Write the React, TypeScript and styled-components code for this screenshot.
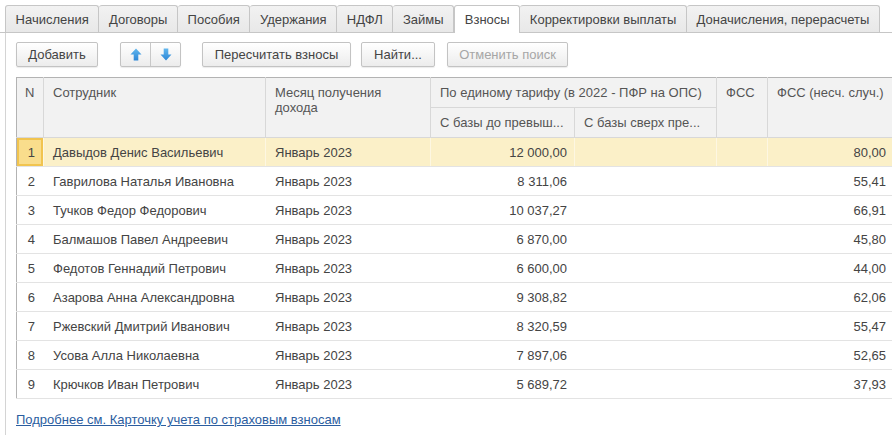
import styled, { createGlobalStyle } from "styled-components";

const GlobalStyle = createGlobalStyle`
  html, body {
    margin: 0;
    padding: 0;
    background: #ffffff;
    overflow: hidden;
  }
  body {
    font-family: "Liberation Sans", Arial, sans-serif;
    font-size: 13px;
    color: #444444;
  }
`;

const Page = styled.div`
  width: 892px;
  height: 435px;
  padding-top: 5px;
  box-sizing: border-box;
  overflow: hidden;
`;

const TabBar = styled.div`
  display: flex;
  padding-left: 5px;
  border-bottom: 1px solid #c6c6c6;
  height: 27px;
`;

const Tab = styled.div<{ $active?: boolean }>`
  box-sizing: border-box;
  padding: 0 9.6px;
  display: flex;
  align-items: center;
  white-space: nowrap;
  color: #444444;
  border: 1px solid #c6c6c6;
  border-left: ${(p) => (p.$active ? "1px solid #c6c6c6" : "none")};
  border-bottom: none;
  border-radius: 3px 3px 0 0;
  background: ${(p) => (p.$active ? "#ffffff" : "linear-gradient(#f2f2f2, #e8e8e8)")};
  height: ${(p) => (p.$active ? "28px" : "27px")};
  &:first-child {
    border-left: 1px solid #c6c6c6;
  }
`;

const Panel = styled.div`
  margin-left: 5px;
  border-left: 1px solid #d4d4d4;
  padding: 9px 0 0 10px;
  height: 400px;
`;

const Toolbar = styled.div`
  display: flex;
  align-items: center;
  height: 25px;
  margin-bottom: 10px;
`;

const Button = styled.button<{ $ml?: number; $w: number; $disabled?: boolean }>`
  margin-left: ${(p) => p.$ml ?? 0}px;
  width: ${(p) => p.$w}px;
  height: 25px;
  box-sizing: border-box;
  border: 1px solid #c3c3c3;
  border-radius: 2px;
  background: linear-gradient(#ffffff, #ececec);
  box-shadow: 0 1px 1px rgba(0, 0, 0, 0.08);
  font-family: "Liberation Sans", Arial, sans-serif;
  font-size: 13px;
  color: ${(p) => (p.$disabled ? "#a6a6a6" : "#444444")};
  padding: 0;
  cursor: default;
`;

const ArrowGroup = styled.div<{ $ml: number }>`
  margin-left: ${(p) => p.$ml}px;
  display: flex;
  height: 25px;
  box-sizing: border-box;
  border: 1px solid #c3c3c3;
  border-radius: 2px;
  background: linear-gradient(#ffffff, #ececec);
  box-shadow: 0 1px 1px rgba(0, 0, 0, 0.08);
`;

const ArrowCell = styled.div<{ $sep?: boolean }>`
  width: 29px;
  display: flex;
  align-items: center;
  justify-content: center;
  border-left: ${(p) => (p.$sep ? "1px solid #c8c8c8" : "none")};
`;

const Grid = styled.table`
  border-collapse: collapse;
  table-layout: fixed;
  width: 881px;
  border-top: 1px solid #b3b3b3;
  border-left: 1px solid #b3b3b3;
  border-bottom: 1px solid #a0a0a0;
`;

const HeadCell = styled.th`
  background: #f2f2f2;
  color: #555555;
  font-weight: normal;
  text-align: left;
  vertical-align: top;
  padding: 7px 8px 0 9px;
  height: 30px;
  box-sizing: border-box;
  line-height: 15px;
  border-right: 1px solid #d8d8d8;
  border-bottom: 1px solid #d8d8d8;
  white-space: nowrap;
  overflow: hidden;
  text-overflow: ellipsis;
`;

const Row = styled.tr<{ $selected?: boolean }>`
  height: 29px;
  background: ${(p) => (p.$selected ? "#fbf0c8" : "#ffffff")};
  td {
    border-right: 1px solid ${(p) => (p.$selected ? "#fdf7e2" : "transparent")};
  }
`;

const Cell = styled.td<{ $right?: boolean; $current?: boolean }>`
  padding: 0 ${(p) => (p.$right ? "7px" : "8px")} 0 9px;
  text-align: ${(p) => (p.$right ? "right" : "left")};
  border-bottom: 1px solid #e3e3e3;
  white-space: nowrap;
  overflow: hidden;
  color: #444444;
  box-sizing: border-box;
  ${(p) =>
    p.$current &&
    `
    background: #f9dd8c;
    box-shadow: inset 0 0 0 2px #f1c44f;
  `}
`;

const NumCell = styled(Cell)`
  padding: 0 8px 0 0;
  text-align: right;
`;

const Link = styled.a`
  display: inline-block;
  margin-top: 13px;
  color: #2b5d9f;
  text-decoration: underline;
  cursor: pointer;
`;

function Arrow({ down }: { down?: boolean }) {
  const id = down ? "ad" : "au";
  return (
    <svg width="12" height="13" viewBox="0 0 12 13" style={{ transform: down ? "rotate(180deg)" : undefined }}>
      <defs>
        <linearGradient id={id} x1="0" y1={down ? "1" : "0"} x2="0" y2={down ? "0" : "1"}>
          <stop offset="0" stopColor="#62b7ee" />
          <stop offset="1" stopColor="#2c86d6" />
        </linearGradient>
      </defs>
      <path d="M6 0.5 L11.5 6.5 H8.3 V12.5 H3.7 V6.5 H0.5 Z" fill={`url(#${id})`} />
    </svg>
  );
}

interface IRow {
  n: number;
  name: string;
  base: string;
  fss: string;
}

const rows: IRow[] = [
  { n: 1, name: "Давыдов Денис Васильевич", base: "12 000,00", fss: "80,00" },
  { n: 2, name: "Гаврилова Наталья Ивановна", base: "8 311,06", fss: "55,41" },
  { n: 3, name: "Тучков Федор Федорович", base: "10 037,27", fss: "66,91" },
  { n: 4, name: "Балмашов Павел Андреевич", base: "6 870,00", fss: "45,80" },
  { n: 5, name: "Федотов Геннадий Петрович", base: "6 600,00", fss: "44,00" },
  { n: 6, name: "Азарова Анна Александровна", base: "9 308,82", fss: "62,06" },
  { n: 7, name: "Ржевский Дмитрий Иванович", base: "8 320,59", fss: "55,47" },
  { n: 8, name: "Усова Алла Николаевна", base: "7 897,06", fss: "52,65" },
  { n: 9, name: "Крючков Иван Петрович", base: "5 689,72", fss: "37,93" },
];

const tabs = [
  "Начисления",
  "Договоры",
  "Пособия",
  "Удержания",
  "НДФЛ",
  "Займы",
  "Взносы",
  "Корректировки выплаты",
  "Доначисления, перерасчеты",
];

function App() {
  return (
    <Page>
      <GlobalStyle />
      <TabBar>
        {tabs.map((t) => (
          <Tab key={t} $active={t === "Взносы"}>
            {t}
          </Tab>
        ))}
      </TabBar>
      <Panel>
        <Toolbar>
          <Button $w={82}>Добавить</Button>
          <ArrowGroup $ml={22}>
            <ArrowCell>
              <Arrow />
            </ArrowCell>
            <ArrowCell $sep>
              <Arrow down />
            </ArrowCell>
          </ArrowGroup>
          <Button $ml={21} $w={149}>
            Пересчитать взносы
          </Button>
          <Button $ml={10} $w={74}>
            Найти...
          </Button>
          <Button $ml={12} $w={121} $disabled>
            Отменить поиск
          </Button>
        </Toolbar>
        <Grid>
          <colgroup>
            <col style={{ width: 27 }} />
            <col style={{ width: 222 }} />
            <col style={{ width: 165 }} />
            <col style={{ width: 144 }} />
            <col style={{ width: 142 }} />
            <col style={{ width: 51 }} />
            <col style={{ width: 130 }} />
          </colgroup>
          <thead>
            <tr>
              <HeadCell rowSpan={2} style={{ paddingLeft: 8 }}>
                N
              </HeadCell>
              <HeadCell rowSpan={2}>Сотрудник</HeadCell>
              <HeadCell rowSpan={2} style={{ whiteSpace: "normal" }}>
                Месяц получения дохода
              </HeadCell>
              <HeadCell colSpan={2}>По единому тарифу (в 2022 - ПФР на ОПС)</HeadCell>
              <HeadCell rowSpan={2}>ФСС</HeadCell>
              <HeadCell rowSpan={2}>ФСС (несч. случ.)</HeadCell>
            </tr>
            <tr>
              <HeadCell>С базы до превыш...</HeadCell>
              <HeadCell>С базы сверх пре...</HeadCell>
            </tr>
          </thead>
          <tbody>
            {rows.map((r) => (
              <Row key={r.n} $selected={r.n === 1}>
                <NumCell $current={r.n === 1}>{r.n}</NumCell>
                <Cell>{r.name}</Cell>
                <Cell>Январь 2023</Cell>
                <Cell $right>{r.base}</Cell>
                <Cell $right />
                <Cell $right />
                <Cell $right style={{ paddingRight: 11 }}>
                  {r.fss}
                </Cell>
              </Row>
            ))}
          </tbody>
        </Grid>
        <Link>Подробнее см. Карточку учета по страховым взносам</Link>
      </Panel>
    </Page>
  );
}

export default App;
